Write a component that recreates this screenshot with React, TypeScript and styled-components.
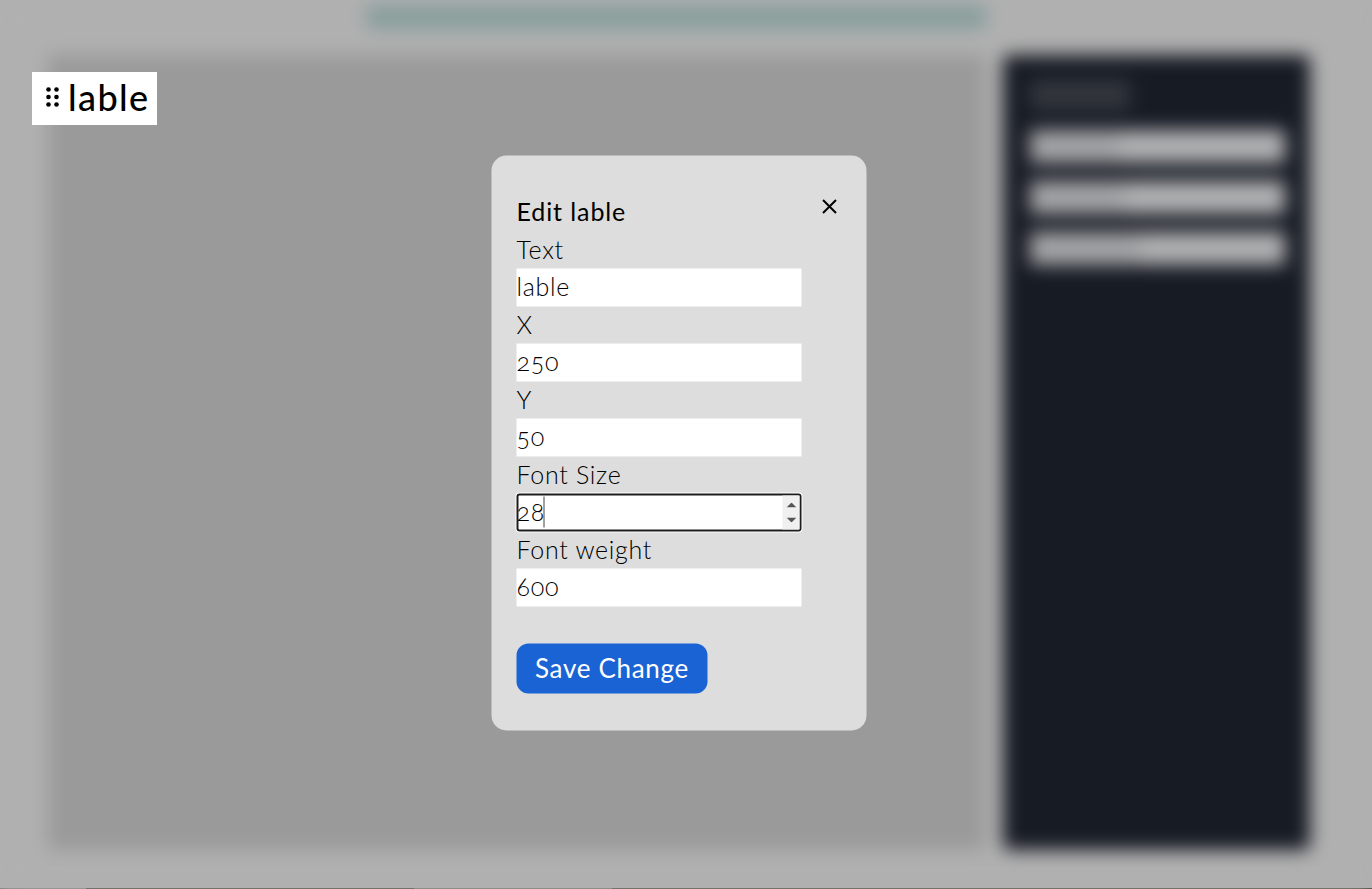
import React from "react";
import styled, { createGlobalStyle } from "styled-components";

const GlobalStyle = createGlobalStyle`
  html, body {
    margin: 0;
    padding: 0;
    height: 100%;
    overflow: hidden;
    background: #b0b0b0;
  }
  * {
    box-sizing: border-box;
  }
`;

const Page = styled.div`
  position: relative;
  width: 1372px;
  height: 889px;
  overflow: hidden;
  font-family: "Lato", "Liberation Sans", sans-serif;
`;

const Blurred = styled.div`
  display: flex;
  flex-direction: column;
  height: 888px;
  background: #b0b0b0;
  filter: blur(9px);
`;

const Banner = styled.div`
  align-self: center;
  margin: 5px 0 0 -21px;
  width: 620px;
  height: 24px;
  background: #879e9c;
  border-radius: 6px;
`;

const Workspace = styled.div`
  display: flex;
  gap: 18px;
  margin: 26px 62px 0 48px;
  height: 795px;
`;

const Canvas = styled.div`
  flex: 1;
  background: #9a9a9a;
`;

const Sidebar = styled.div`
  display: flex;
  flex-direction: column;
  width: 307px;
  padding: 25px 25px 25px 27px;
  background: #171b24;
  border-radius: 6px;
`;

const SidebarTitle = styled.div`
  width: 100px;
  height: 30px;
  margin-bottom: 20px;
  background: #32363c;
`;

const SidebarRow = styled.div`
  height: 33px;
  margin-bottom: 18px;
  background: #b0b1b2;
`;

const RowText = styled.div<{ $w: number }>`
  width: ${(p) => p.$w}px;
  height: 100%;
  background: #a3a4a6;
`;

const BottomEdge = styled.div`
  display: flex;
  height: 1px;
`;

const EdgePart = styled.div<{ $w: number; $c: string }>`
  width: ${(p) => p.$w}px;
  background: ${(p) => p.$c};
`;

const DragLabel = styled.div`
  position: absolute;
  left: 32px;
  top: 72px;
  display: flex;
  align-items: center;
  gap: 9px;
  width: 125px;
  height: 53px;
  padding: 0 0 3px 14px;
  background: #fff;
  color: #000;
  font-size: 36px;
  font-weight: 500;
  letter-spacing: 1.4px;
`;

const Modal = styled.form`
  position: absolute;
  left: 679px;
  top: 443px;
  transform: translate(-50%, -50%);
  display: flex;
  flex-direction: column;
  width: 375px;
  height: 575px;
  padding: 38px 25px 0;
  background: #dddddd;
  border-radius: 15px;
  color: #000;
`;

const Title = styled.h2`
  margin: 0;
  height: 37.5px;
  font-size: 25px;
  line-height: 35px;
  font-weight: 400;
  letter-spacing: 0.9px;
  color: #000;
`;

const CloseButton = styled.button`
  position: absolute;
  top: 42.5px;
  right: 29.5px;
  display: flex;
  padding: 0;
  border: 0;
  background: none;
  cursor: pointer;
`;

const FieldLabel = styled.label`
  display: block;
  height: 37.5px;
  font-size: 25px;
  line-height: 35px;
  font-weight: 300;
  letter-spacing: 0.7px;
`;

const InputBox = styled.div<{ $focused?: boolean }>`
  position: relative;
  width: 285px;
  height: 37.5px;
  background: #fff;
  border-radius: ${(p) => (p.$focused ? "3px" : "0")};
  outline: ${(p) => (p.$focused ? "2px solid #1c1c1c" : "none")};
  outline-offset: -2px;
  box-shadow: ${(p) => (p.$focused ? "0 0 0 1px #fff" : "none")};
`;

const Input = styled.input`
  display: block;
  width: 100%;
  height: 100%;
  padding: 0 0 3px;
  border: 0;
  outline: 0;
  background: transparent;
  font-family: inherit;
  font-size: 25px;
  font-weight: 300;
  letter-spacing: 0.7px;
  font-variant-numeric: oldstyle-nums;
  color: #000;
`;

const Caret = styled.span<{ $left: number }>`
  position: absolute;
  left: ${(p) => p.$left}px;
  top: 3px;
  width: 1px;
  height: 31px;
  background: #444;
`;

const Spinner = styled.div`
  position: absolute;
  top: 2px;
  right: 2px;
  bottom: 2px;
  width: 17px;
  display: flex;
  flex-direction: column;
  align-items: center;
  justify-content: space-around;
  padding: 2px 0;
  background: #f0f0f0;
`;

const SaveButton = styled.button`
  width: 191px;
  height: 50px;
  margin-top: 37.5px;
  padding: 0 0 3px;
  border: 0;
  border-radius: 12px;
  background: #1a63d4;
  color: #fff;
  font-family: inherit;
  font-size: 26px;
  font-weight: 400;
  letter-spacing: 0.7px;
  white-space: nowrap;
  cursor: pointer;
`;

const DotsIcon = () => (
  <svg width="13" height="20" viewBox="0 0 13 20" fill="#000">
    <circle cx="2.5" cy="2.5" r="2.3" />
    <circle cx="10.5" cy="2.5" r="2.3" />
    <circle cx="2.5" cy="10" r="2.3" />
    <circle cx="10.5" cy="10" r="2.3" />
    <circle cx="2.5" cy="17.5" r="2.3" />
    <circle cx="10.5" cy="17.5" r="2.3" />
  </svg>
);

const CloseIcon = () => (
  <svg width="16" height="16" viewBox="0 0 16 16" fill="none" stroke="#000" strokeWidth="2">
    <path d="M1.5 1.5 L14.5 14.5 M14.5 1.5 L1.5 14.5" />
  </svg>
);

const Arrow = ({ down }: { down?: boolean }) => (
  <svg width="10" height="5" viewBox="0 0 10 5" fill="#555">
    <path d={down ? "M0 0 H10 L5 5 Z" : "M0 5 H10 L5 0 Z"} />
  </svg>
);

const fields = [
  { label: "Text", value: "lable" },
  { label: "X", value: "250" },
  { label: "Y", value: "50" },
  { label: "Font Size", value: "28", focused: true },
  { label: "Font weight", value: "600" },
];

const edge: [number, string][] = [
  [86, "#7d7d7d"],
  [328, "#3a3a2c"],
  [198, "#6e6e62"],
  [760, "#3a3a2c"],
];

export default function App() {
  return (
    <Page>
      <GlobalStyle />
      <Blurred>
        <Banner />
        <Workspace>
          <Canvas />
          <Sidebar>
            <SidebarTitle />
            <SidebarRow>
              <RowText $w={90} />
            </SidebarRow>
            <SidebarRow>
              <RowText $w={95} />
            </SidebarRow>
            <SidebarRow>
              <RowText $w={110} />
            </SidebarRow>
          </Sidebar>
        </Workspace>
      </Blurred>
      <BottomEdge>
        {edge.map(([w, c], i) => (
          <EdgePart key={i} $w={w} $c={c} />
        ))}
      </BottomEdge>
      <DragLabel>
        <DotsIcon />
        lable
      </DragLabel>
      <Modal onSubmit={(e) => e.preventDefault()}>
        <Title>Edit lable</Title>
        <CloseButton type="button" aria-label="Close">
          <CloseIcon />
        </CloseButton>
        {fields.map((f) => (
          <React.Fragment key={f.label}>
            <FieldLabel>{f.label}</FieldLabel>
            <InputBox $focused={f.focused}>
              <Input type="text" defaultValue={f.value} />
              {f.focused && (
                <>
                  <Caret $left={27} />
                  <Spinner>
                    <Arrow />
                    <Arrow down />
                  </Spinner>
                </>
              )}
            </InputBox>
          </React.Fragment>
        ))}
        <SaveButton type="submit">Save Change</SaveButton>
      </Modal>
    </Page>
  );
}
